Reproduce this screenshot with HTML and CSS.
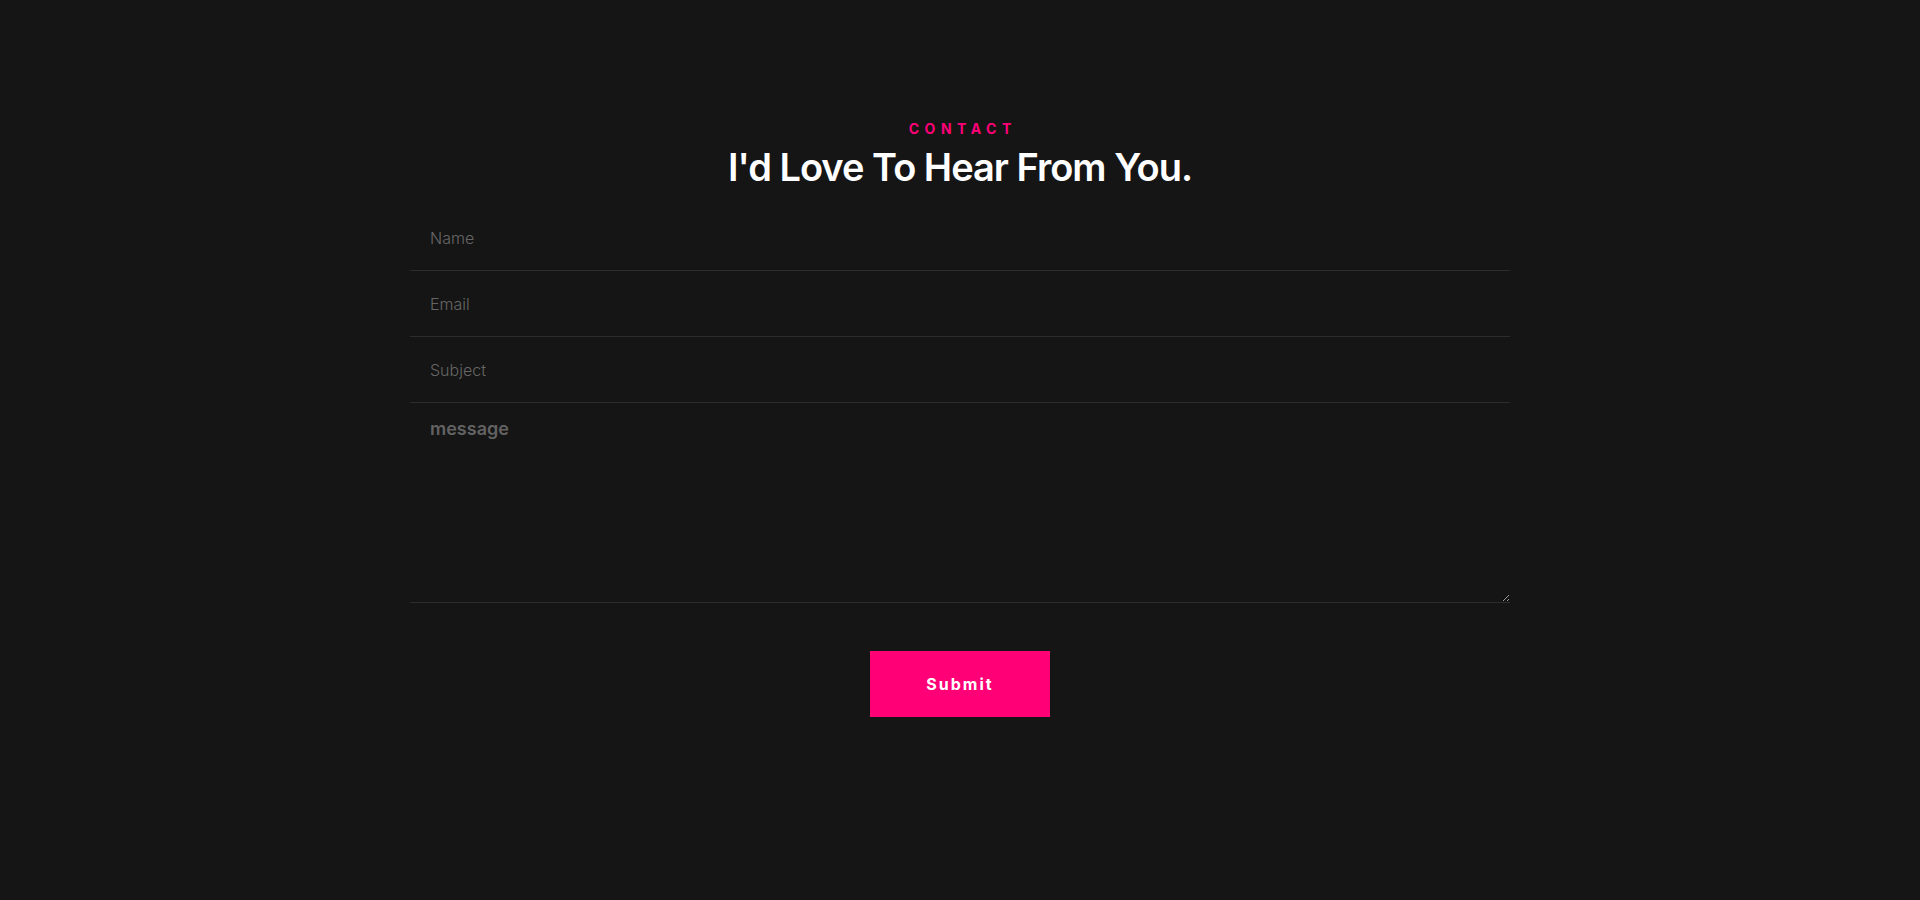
FILE: index.html
```html
<!DOCTYPE html>
<html lang="en">
<head>
<meta charset="utf-8">
<title>Contact</title>
<link rel="stylesheet" href="styles.css">
</head>
<body>
<section class="contact">
  <div class="contact-inner">
    <p class="eyebrow">CONTACT</p>
    <h2 class="title">I'd Love To Hear From You.</h2>
    <form class="form" onsubmit="return false;">
      <input class="field" type="text" placeholder="Name">
      <input class="field" type="email" placeholder="Email">
      <input class="field" type="text" placeholder="Subject">
      <textarea class="field message" placeholder="message"></textarea>
      <div class="actions">
        <button class="submit" type="submit">Submit</button>
      </div>
    </form>
  </div>
</section>
</body>
</html>
```
FILE: styles.css
```css
* { box-sizing: border-box; }
html, body { margin: 0; padding: 0; }
body {
  background: #151515;
  font-family: "Inter", "DejaVu Sans", sans-serif;
  color: #fff;
  min-height: 900px;
}
.contact {
  padding-top: 119px;
}
.contact-inner {
  width: 1100px;
  margin: 0 auto;
  display: flex;
  flex-direction: column;
  align-items: center;
}
.eyebrow {
  margin: 0;
  font-size: 14px;
  line-height: 20px;
  font-weight: 700;
  letter-spacing: 5.5px;
  padding-left: 5.5px;
  color: #ff0077;
}
.title {
  margin: 2px 0 0;
  font-size: 38px;
  line-height: 52px;
  font-weight: 600;
  letter-spacing: -1px;
  color: #fff;
}
.form {
  width: 100%;
  margin-top: 12px;
  display: flex;
  flex-direction: column;
}
.field {
  display: block;
  width: 100%;
  height: 66px;
  padding: 0 20px;
  background: transparent;
  border: none;
  border-bottom: 1px solid #2c2c2c;
  color: #ccc;
  font-family: "Inter", "DejaVu Sans", sans-serif;
  font-size: 16px;
  font-weight: 300;
  outline: none;
}
.field::placeholder { color: #666; }
.message {
  height: 200px;
  padding: 15px 20px;
  resize: vertical;
  font-size: 18px;
  font-weight: 600;
}
.message::placeholder {
  color: #626262;
}
.actions {
  display: flex;
  justify-content: center;
  margin-top: 48px;
}
.submit {
  width: 180px;
  height: 66px;
  border: none;
  background: #ff0077;
  color: #fff;
  font-family: "Inter", "DejaVu Sans", sans-serif;
  font-size: 16px;
  font-weight: 700;
  letter-spacing: 2px;
  cursor: pointer;
}
```
